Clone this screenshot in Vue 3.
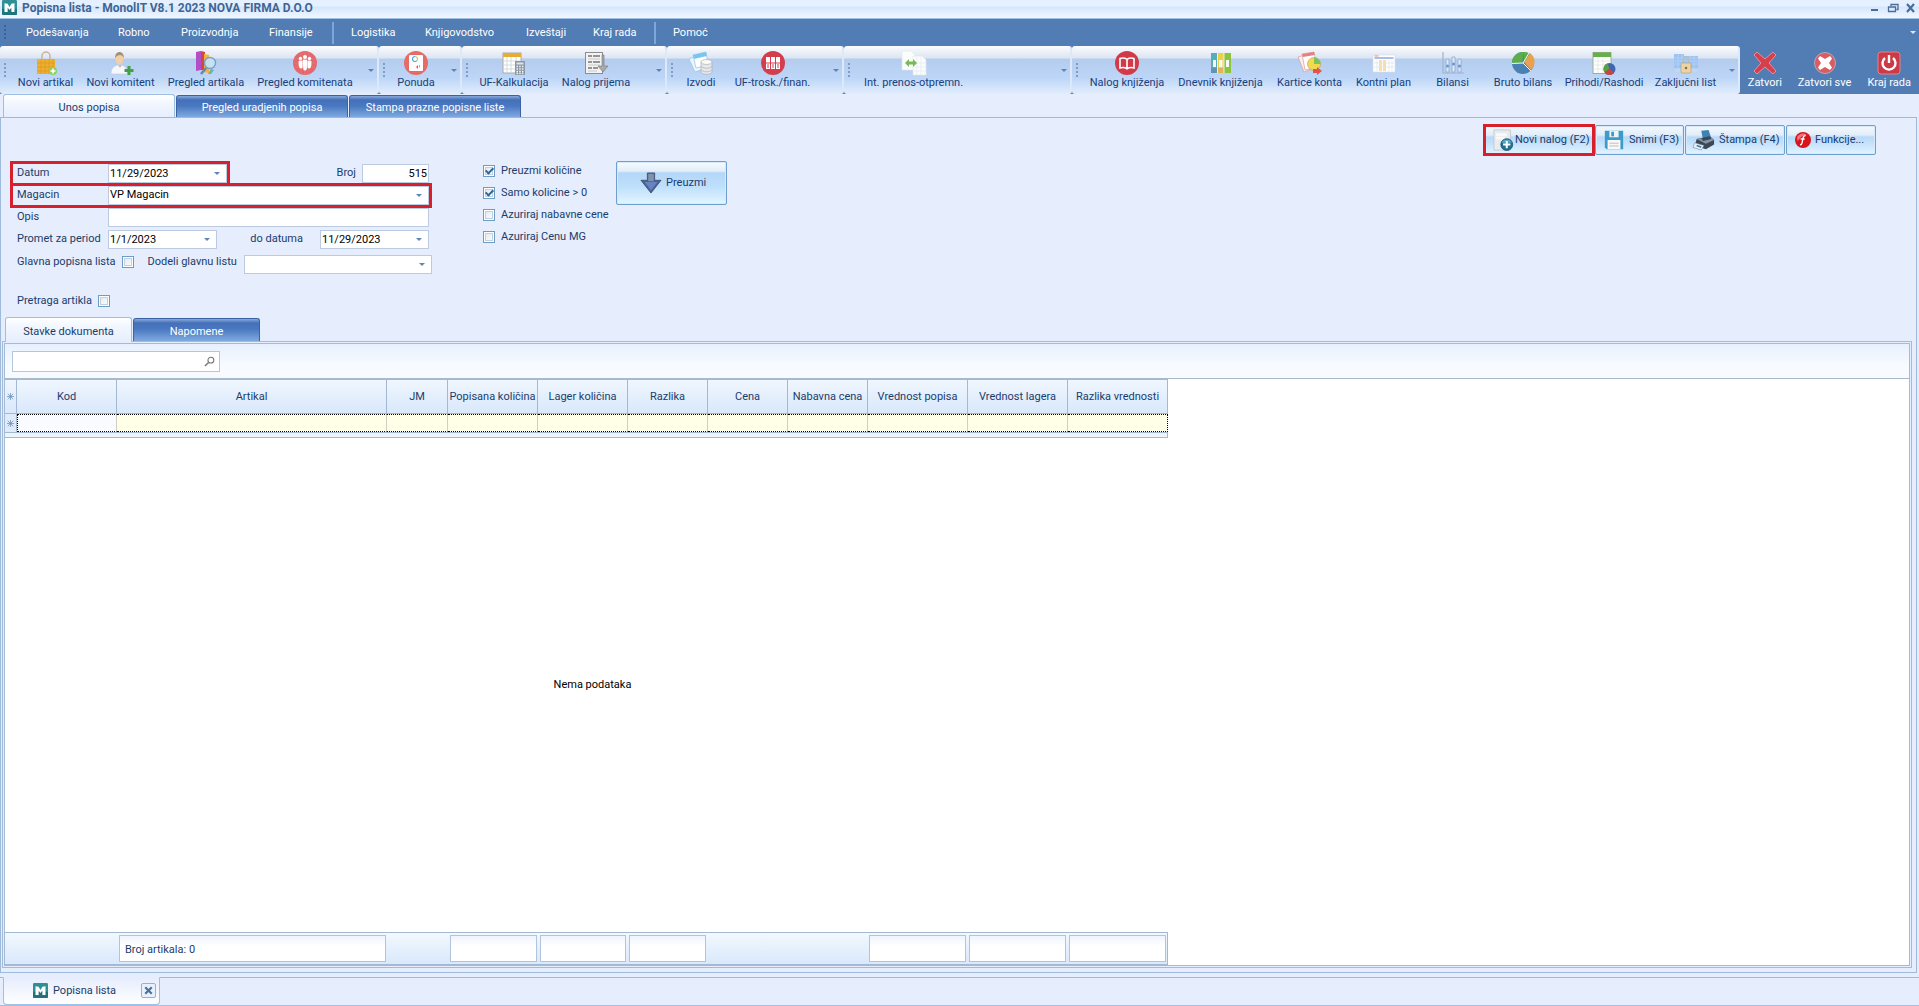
<script setup>
import { ref } from 'vue'

const menu = [
  { label: 'Podešavanja', w: 92 },
  { label: 'Robno', w: 63 },
  { label: 'Proizvodnja', w: 88 },
  { label: 'Finansije', w: 64 },
  { sep: true },
  { label: 'Logistika', w: 74 },
  { label: 'Knjigovodstvo', w: 101 },
  { label: 'Izveštaji', w: 67 },
  { label: 'Kraj rada', w: 62 },
  { sep: true },
  { label: 'Pomoć', w: 64 },
]

const icons = {
  logo: '<rect width="24" height="24" rx="2" fill="#2f8f96"/><path d="M0 14h24v8a2 2 0 0 1-2 2H2a2 2 0 0 1-2-2z" fill="#1f737d"/><path d="M4 5l5 1 3 5 3-5 5-1v14h-5v-7l-3 4-3-4v7H4z" fill="#fff"/>',
  bag: '<path d="M8 10V5a4 4 0 0 1 8 0v5" fill="none" stroke="#c9b49a" stroke-width="1.5"/><path d="M3 8h18v15H3z" fill="#eeb02c"/><path d="M3 12h18M3 16h18M3 20h18M7 8v15M11 8v15M15 8v15M19 8v15" stroke="#d9942a" stroke-width=".6"/><circle cx="19" cy="20" r="4" fill="#8fd060"/><path d="M19 17.500v5M16.500 20h5" stroke="#fff" stroke-width="1.600"/>',
  person: '<path d="M2 23c0-6 3-8 7-9h3c4 1 6 3 6 9z" fill="#f4f7fb" stroke="#c7d0dc" stroke-width=".7"/><ellipse cx="10.500" cy="7.500" rx="4" ry="6" fill="#f0cfa9"/><path d="M6 7c0-8 9-8 9 0-2-4-6-4-9 0z" fill="#a58f78"/><path d="M9 14l2 3 2-3" fill="#e4b98e"/><path d="M20 15v9M15.500 19.500h9" stroke="#43a047" stroke-width="3"/>',
  books: '<path d="M2 1l5-1v19l-5 1z" fill="#b04fc8"/><path d="M7 0l4 1v18l-4 0z" fill="#d8453c"/><path d="M10 3l5 1v18l-5-1z" fill="#f4b13c"/><circle cx="16" cy="12" r="5.500" fill="#c4e4fa" fill-opacity=".9" stroke="#7d9fc0" stroke-width="1.400"/><path d="M12 17l-5 6" stroke="#6b87a5" stroke-width="2.600"/><path d="M17 18l3 1-3 4h-3z" fill="#6fb2a0"/>',
  people: '<circle cx="12" cy="12" r="12" fill="#e4676b"/><path d="M2 8h20M1 12h22M2 16h20M8 1v22M12 0v24M16 1v22" stroke="#d9888c" stroke-width=".5"/><circle cx="7.500" cy="7.500" r="1.700" fill="#fff"/><circle cx="12" cy="6" r="2" fill="#fff"/><circle cx="16.500" cy="7.500" r="1.700" fill="#fff"/><path d="M6 10h3v7H7l-1-3zM10 9h4v6l-1 4h-2l-1-4zM15 10h3v4l-1 3h-2z" fill="#fff" stroke="#fff" stroke-width=".8"/>',
  offer: '<circle cx="12" cy="12" r="12" fill="#e66a66"/><rect x="5" y="4" width="14" height="16" rx="1" fill="#fff"/><path d="M11 5.500a2.500 2.500 0 1 0 2 4" fill="none" stroke="#52a8e0" stroke-width="1.200"/><path d="M11 5.500a2.500 2.500 0 0 1 2 4" fill="none" stroke="#e6b84c" stroke-width="1.200"/><path d="M12 16l2-2v4zM15 15l1-1v3z" fill="#e0575a"/>',
  calc: '<rect x="1" y="2" width="18" height="20" fill="#fff" stroke="#a9a9a9"/><path d="M1 2h18v4H1z" fill="#e6ad32"/><path d="M1 10h18M1 14h18M1 18h18M5 6v16M9 6v16M14 6v16" stroke="#cdd3da" stroke-width=".8"/><rect x="13" y="10" width="10" height="14" fill="#8c97a3"/><rect x="14.500" y="11.500" width="7" height="2" fill="#dbe5ee"/><path d="M14.500 15.500h7M14.500 18h7M14.500 20.500h7M14.500 22.500h7" stroke="#f2f5f8" stroke-width="1.300" stroke-dasharray="1.500 1.200"/>',
  receipt: '<rect x="1.500" y="1.500" width="17" height="21" fill="#f3f3f3" stroke="#8d8d8d"/><path d="M4 5h4M9 5h7M4 11h4M9 11h7M4 17h4M9 17h5" stroke="#777" stroke-width="1.400"/><path d="M4 8h12M4 14h12M4 20h9" stroke="#c9c9c9"/><path d="M18 4h2v11h4l-5 6-5-6h4z" fill="#a9a9a9" stroke="#777" stroke-width=".6"/>',
  statement: '<path d="M0 8l14-6 3 15-11 4z" fill="#eaf5fd" stroke="#9bc9e8" stroke-width=".8"/><path d="M4 4l13-3 2 13-12 3z" fill="#fff" stroke="#9bc9e8" stroke-width=".8"/><path d="M4 4l13-3 .8 4L5 8z" fill="#79c4f1"/><path d="M12 11v10c0 3 11 3 11 0V11z" fill="#e6e8ea" stroke="#aab0b5" stroke-width=".7"/><ellipse cx="17.500" cy="11" rx="5.500" ry="2.500" fill="#f9f9f9" stroke="#aab0b5" stroke-width=".7"/><path d="M12 15c1 3 10 3 11 0M12 18.500c1 3 10 3 11 0" fill="none" stroke="#aab0b5" stroke-width=".7"/>',
  folders: '<circle cx="12" cy="12" r="12" fill="#d43d4c"/><path d="M5 6h4v12H5zM10 6h4v12h-4zM15 6h4v12h-4z" fill="#fff"/><path d="M4 12h16" stroke="#d43d4c" stroke-width="1"/><path d="M7 13v4M12 13v4M17 13v4" stroke="#d43d4c" stroke-width="1"/>',
  transfer: '<path d="M0 0h9l4 4v15H0z" fill="#fbfdfc" stroke="#dfe7e9" stroke-width=".6"/><path d="M11 5h9l4 4v15H11z" fill="#fbfdfc" stroke="#dfe7e9" stroke-width=".6"/><path d="M11 12h13M11 16h13M11 20h13M15 5v19M19 5v19" stroke="#e2eaee" stroke-width=".6"/><path d="M3 12l4-4v2.500h4V8l4 4-4 4v-2.500H7V16z" fill="#79b956"/>',
  book: '<circle cx="12" cy="12" r="12" fill="#d33a49"/><path d="M5 7.500c3-1 5-.5 7 .8 2-1.300 4-1.800 7-.8v9.500c-3-1-5-.5-7 .8-2-1.300-4-1.800-7-.8zM12 8v10" fill="none" stroke="#fff" stroke-width="1.600"/>',
  binders: '<rect x="2" y="2" width="6.500" height="20" fill="#54aebb"/><rect x="8.500" y="2" width="6.500" height="20" fill="#ecd04b"/><rect x="15" y="2" width="7" height="20" fill="#8bc53f"/><path d="M4 9h3v7H4zM10 9h3.500v7H10zM17 9h3v7h-3z" fill="#f7f8f2"/><path d="M2 17h6.500v5H2z" fill="#5f94b4"/><path d="M8.500 17H15v5H8.500z" fill="#e0b654"/><path d="M8.500 2v20M15 2v20" stroke="#fff" stroke-width=".8"/>',
  cards: '<path d="M0 6l10-3 4 15-8 3z" fill="#fbeeee" stroke="#d99" stroke-width=".7"/><path d="M4 3l12-2 3 15-12 3z" fill="#fff" stroke="#d99" stroke-width=".7"/><path d="M4 3l12-2 .7 3L5 6z" fill="#e58080"/><circle cx="16" cy="13" r="6.500" fill="#f3d94e" stroke="#b9a04c" stroke-width=".6"/><path d="M16 13V6.500a6.500 6.500 0 0 1 6.500 6.500z" fill="#7bc35b"/><path d="M15 18h4v-2l5 4-5 4v-2h-4z" fill="#e0564e"/>',
  plan: '<rect x="1" y="4" width="22" height="17" fill="#fff" stroke="#d5dde8" stroke-width=".7"/><path d="M2.500 7h19" stroke="#8fa9dc" stroke-width="1.500"/><path d="M2.500 5h4" stroke="#e38b7d"/><path d="M7 9h3v11H7zM11 9h3v11h-3z" fill="#f8dfa8"/><path d="M2 12h20M2 16h20M5 9v11M17 9v11M20 9v11" stroke="#dce3ec" stroke-width=".7"/>',
  chart: '<path d="M2 1v21h21" fill="none" stroke="#9db3d0" stroke-width="1.200"/><path d="M5 8h3v13H5zM11 6h3v15h-3zM17 8h3v13h-3z" fill="#dfeaf8" stroke="#8aa8d0" stroke-width=".8"/><circle cx="6.500" cy="15" r="1.500" fill="#6d93c8"/><circle cx="12.500" cy="13" r="1.500" fill="#6d93c8"/><circle cx="18.500" cy="15" r="1.500" fill="#6d93c8"/>',
  pie: '<circle cx="12" cy="12" r="11" fill="#4b80b3"/><path d="M11 12L13 1A11 11 0 0 0 1 12.500z" fill="#5dae4a"/><path d="M13 11l6-9a11 11 0 0 1 1 17z" fill="#e8a14e"/><path d="M13 11V1a11 11 0 0 1 6 1.500z" fill="#5dae4a"/><path d="M1 12.500L12 12l8 8M12 12l6-10" fill="none" stroke="#f2f6fa" stroke-width="1"/>',
  income: '<rect x="1" y="1.500" width="18" height="21" fill="#fdfefd" stroke="#9cad9c"/><path d="M1 1.500h18V6H1z" fill="#66b04a"/><path d="M1 10h18M1 14h18M1 18h18M6 6v16M11 6v16" stroke="#dbe3db" stroke-width=".6"/><circle cx="17.500" cy="18" r="6" fill="#4365ae"/><path d="M17.500 18l-2-5.700a6 6 0 0 0-3 9z" fill="#5d9f45"/><path d="M17.500 18l-5 3.400A6 6 0 0 0 22 22z" fill="#c9443f"/>',
  lock: '<path d="M0 3h10v2h14v12H0z" fill="#9cc4f3"/><path d="M0 7h24M0 10h24M0 13h24M4 3v14M8 3v14M16 5v12M20 5v12" stroke="#bdd9f8" stroke-width=".6"/><path d="M1 18h22v3H1z" fill="#c4d6ea"/><path d="M9 12V9a3 3 0 0 1 6 0v3" fill="none" stroke="#b9bec4" stroke-width="1.800"/><rect x="7" y="12" width="10" height="10" rx="1" fill="#ecd3a5" stroke="#b49a6c" stroke-width=".6"/><circle cx="12" cy="17" r="1.300" fill="#8c7347"/>',
  close: '<path d="M4 1l8 7 8-7 3 3-7 8 7 8-3 3-8-7-8 7-3-3 7-8-7-8z" fill="#d5404e" stroke="#e88e96" stroke-width="1"/>',
  closeall: '<circle cx="12" cy="12" r="10.500" fill="#dc5a62" stroke="#a9adc0" stroke-width="1"/><path d="M7 5l5 3 5-3 2 2.500-3 4.500 3 4.500-2 2.500-5-3-5 3-2-2.500L8 12 5 7.500z" fill="#fff"/>',
  power: '<rect x="1" y="1" width="22" height="22" rx="3" fill="#cc3a46" stroke="#e4808a"/><path d="M8 7a6.500 6.500 0 1 0 8 0M12 4v8" fill="none" stroke="#fff" stroke-width="2.400"/>',
  newdoc: '<path d="M1 1h18v22H1z" fill="#e9ecee"/><path d="M1 1h18v22H1z" fill="none" stroke="#b9c3cc" stroke-width=".8"/><path d="M3 6h12M3 10h10" stroke="#f7f9fa" stroke-width="3"/><circle cx="15" cy="17" r="6.500" fill="#1d7291" stroke="#144e68" stroke-width=".8"/><path d="M9.500 15a6 6 0 0 1 11 0z" fill="#58a9c4"/><path d="M15 13v8M11 17h8" stroke="#fff" stroke-width="2.200"/>',
  save: '<path d="M2 2h20v20H4l-2-2z" fill="#3e9ac9"/><path d="M7 2h10v7H7z" fill="#eef5f9"/><path d="M9 3h3v5H9z" fill="#3e9ac9"/><path d="M5 12h14v10H5z" fill="#f8f8f8"/><path d="M7 15.500h10M7 18.500h10" stroke="#b9b9b9"/>',
  print: '<path d="M9 2l8-1 3 9-9 2z" fill="#3f82b5"/><path d="M4 11l14-3 5 4v5l-9 5-12-4z" fill="#3c4754"/><path d="M4 11l5-1 2 3 9-2-1-3 4 4-9 4z" fill="#8695a6"/><path d="M2 15l10 3-3 5-9-3z" fill="#eef3f8" stroke="#6a7d91" stroke-width=".6"/><path d="M4 18l5 1.700" stroke="#3f82b5" stroke-width="2"/>',
  func: '<circle cx="12" cy="12" r="12" fill="#d8141c"/><path d="M3 8a10 9 0 0 1 15-4C12 4 8 8 4 14z" fill="#f0787c"/><path d="M16 5.500c-3-.5-3.500 1.500-4 4l-1.500 7c-.5 2-1 3-3 2.500M8.500 10.500h6" fill="none" stroke="#fff" stroke-width="2"/>',
  down: '<path d="M8 1h8v8h7L12 23 1 9h7z" fill="#4b638e" stroke="#34466b" stroke-width=".8"/><path d="M9 2h6v8h-6z" fill="#8392ac"/><path d="M5 11h14l-7 9z" fill="#6683c4"/>',
}

const groups = [
  { cls: 'g1', items: [['Novi artikal', 'bag', 69], ['Novi komitent', 'person', 81], ['Pregled artikala', 'books', 90], ['Pregled komitenata', 'people', 108]] },
  { cls: 'g2', items: [['Ponuda', 'offer', 52]] },
  { cls: 'g3', items: [['UF-Kalkulacija', 'calc', 82], ['Nalog prijema', 'receipt', 82]] },
  { cls: 'g4', items: [['Izvodi', 'statement', 46], ['UF-trosk./finan.', 'folders', 97]] },
  { cls: 'g5', items: [['Int. prenos-otpremn.', 'transfer', 117]] },
  { cls: 'g6', items: [['Nalog knjiženja', 'book', 88], ['Dnevnik knjiženja', 'binders', 99], ['Kartice konta', 'cards', 79], ['Kontni plan', 'plan', 69], ['Bilansi', 'chart', 69], ['Bruto bilans', 'pie', 72], ['Prihodi/Rashodi', 'income', 90], ['Zaključni list', 'lock', 73]] },
]
const exits = [['Zatvori', 'close', 50], ['Zatvori sve', 'closeall', 70], ['Kraj rada', 'power', 60]]

const columns = [
  { label: 'Kod', w: 100 },
  { label: 'Artikal', w: 270, sum: 'Broj artikala: 0' },
  { label: 'JM', w: 61 },
  { label: 'Popisana količina', w: 90, sum: '' },
  { label: 'Lager količina', w: 90, sum: '' },
  { label: 'Razlika', w: 80, sum: '' },
  { label: 'Cena', w: 80 },
  { label: 'Nabavna cena', w: 80 },
  { label: 'Vrednost popisa', w: 100, sum: '' },
  { label: 'Vrednost lagera', w: 100, sum: '' },
  { label: 'Razlika vrednosti', w: 100, sum: '' },
]

const datum = ref('11/29/2023')
const broj = ref('515')
const magacin = ref('VP Magacin')
const opis = ref('')
const od = ref('1/1/2023')
const doDatuma = ref('11/29/2023')
const glavna = ref(false)
const lista = ref('')
const pretraga = ref(false)
const trazi = ref('')
const options = ref([
  { id: 'o1', label: 'Preuzmi količine', on: true },
  { id: 'o2', label: 'Samo kolicine > 0', on: true },
  { id: 'o3', label: 'Azuriraj nabavne cene', on: false },
  { id: 'o4', label: 'Azuriraj Cenu MG', on: false },
])
</script>

<template>
  <div class="app">
    <header class="title">
      <svg class="logo" viewBox="0 0 24 24" v-html="icons.logo"></svg>
      <h1>Popisna lista - MonolIT V8.1 2023 NOVA FIRMA D.O.O</h1>
      <div class="wins">
        <button aria-label="Minimize"><svg viewBox="0 0 12 12"><path d="M2 7h7v2H2z" fill="#4c6c9c" /></svg></button>
        <button aria-label="Restore"><svg viewBox="0 0 12 12"><path d="M4 4V2.500h7v5H9.500M1.500 5h7v4.500h-7zM1 5h8" fill="none" stroke="#4c6c9c" stroke-width="1.300" /></svg></button>
        <button aria-label="Close"><svg viewBox="0 0 12 12"><path d="M2 2l7 8M9 2L2 10" stroke="#4c6c9c" stroke-width="2.200" /></svg></button>
      </div>
    </header>

    <nav class="menu">
      <span class="grip"></span>
      <template v-for="(m, i) in menu" :key="i">
        <span v-if="m.sep" class="msep"></span>
        <button v-else :style="{ width: m.w + 'px' }">{{ m.label }}</button>
      </template>
      <span class="arrow light"></span>
    </nav>

    <div class="tools">
      <div v-for="g in groups" :key="g.cls" class="group" :class="g.cls">
        <span class="grip"></span>
        <button v-for="t in g.items" :key="t[0]" class="tool" :style="{ width: t[2] + 'px' }">
          <svg viewBox="0 0 24 24" v-html="icons[t[1]]"></svg>
          <span>{{ t[0] }}</span>
        </button>
        <span class="arrow"></span>
      </div>
      <div class="exits">
        <button v-for="t in exits" :key="t[0]" class="tool" :style="{ width: t[2] + 'px' }">
          <svg viewBox="0 0 24 24" v-html="icons[t[1]]"></svg>
          <span>{{ t[0] }}</span>
        </button>
      </div>
    </div>

    <div class="tabs main">
      <button class="tab on">Unos popisa</button>
      <button class="tab">Pregled uradjenih popisa</button>
      <button class="tab">Stampa prazne popisne liste</button>
    </div>

    <main class="page">
      <div class="actions">
        <button class="glass a1 marked"><svg viewBox="0 0 24 24" v-html="icons.newdoc"></svg>Novi nalog (F2)</button>
        <button class="glass a2"><svg viewBox="0 0 24 24" v-html="icons.save"></svg>Snimi (F3)</button>
        <button class="glass a3"><svg viewBox="0 0 24 24" v-html="icons.print"></svg>Štampa (F4)</button>
        <button class="glass a4"><svg viewBox="0 0 24 24" v-html="icons.func"></svg>Funkcije...</button>
      </div>

      <div class="form">
        <div class="fields">
          <div class="row">
            <div class="pair marked">
              <label class="lead" for="datum">Datum</label>
              <span class="combo date1"><input id="datum" v-model="datum"><i class="arrow"></i></span>
            </div>
            <label class="end" for="broj">Broj</label>
            <span class="combo num"><input id="broj" v-model="broj"></span>
          </div>
          <div class="row">
            <div class="pair wide marked">
              <label class="lead" for="magacin">Magacin</label>
              <span class="combo full"><select id="magacin" v-model="magacin"><option>VP Magacin</option></select><i class="arrow"></i></span>
            </div>
          </div>
          <div class="row">
            <label class="lead" for="opis">Opis</label>
            <span class="combo full"><input id="opis" v-model="opis"></span>
          </div>
          <div class="row">
            <label class="lead" for="od">Promet za period</label>
            <span class="combo date2"><input id="od" v-model="od"><i class="arrow"></i></span>
            <label class="end" for="do">do datuma</label>
            <span class="combo date2 gap"><input id="do" v-model="doDatuma"><i class="arrow"></i></span>
          </div>
          <div class="row low">
            <label class="check rev"><input v-model="glavna" type="checkbox">Glavna popisna lista</label>
            <label class="mid" for="lista">Dodeli glavnu listu</label>
            <span class="combo list"><select id="lista" v-model="lista"><option value=""></option></select><i class="arrow"></i></span>
          </div>
          <div class="row search-row">
            <label class="check rev"><input v-model="pretraga" type="checkbox">Pretraga artikla</label>
          </div>
        </div>

        <div class="options">
          <label v-for="o in options" :key="o.id" class="check"><input v-model="o.on" type="checkbox">{{ o.label }}</label>
        </div>

        <button class="glass take"><svg viewBox="0 0 24 24" v-html="icons.down"></svg>Preuzmi</button>
      </div>

      <div class="tabs sub">
        <button class="tab on">Stavke dokumenta</button>
        <button class="tab">Napomene</button>
      </div>

      <section class="items">
        <div class="sheet">
          <div class="find">
            <label class="findbox">
              <input v-model="trazi" aria-label="Pretraga">
              <svg viewBox="0 0 12 12"><circle cx="7.500" cy="4.500" r="3.200" fill="none" stroke="#777" stroke-width="1.200" /><path d="M5 7L1 11" stroke="#777" stroke-width="1.600" /></svg>
            </label>
          </div>
          <div class="grid">
            <table>
              <colgroup>
                <col class="mark">
                <col v-for="c in columns" :key="c.label" :style="{ width: c.w + 'px' }">
              </colgroup>
              <thead>
                <tr>
                  <th><svg class="star" viewBox="0 0 9 9"><path d="M4.500 0v9M0 4.500h9M1 1l7 7M8 1l-7 7" /></svg></th>
                  <th v-for="c in columns" :key="c.label">{{ c.label }}</th>
                </tr>
              </thead>
              <tbody>
                <tr>
                  <td class="handle"><svg class="star" viewBox="0 0 9 9"><path d="M4.500 0v9M0 4.500h9M1 1l7 7M8 1l-7 7" /></svg></td>
                  <td v-for="c in columns" :key="c.label"></td>
                </tr>
              </tbody>
            </table>
            <div class="strip"></div>
            <div class="empty">Nema podataka</div>
            <div class="totals">
              <span class="mark"></span>
              <div v-for="c in columns" :key="c.label" class="cell" :style="{ width: c.w + 'px' }">
                <output v-if="c.sum !== undefined">{{ c.sum }}</output>
              </div>
            </div>
          </div>
        </div>
      </section>
    </main>

    <footer class="docs">
      <div class="doc">
        <svg class="logo" viewBox="0 0 24 24" v-html="icons.logo"></svg>
        <span>Popisna lista</span>
        <button aria-label="Zatvori karticu"><svg viewBox="0 0 12 12"><path d="M3 3l6 6M9 3L3 9" stroke="#4a719f" stroke-width="2" /></svg></button>
      </div>
    </footer>
  </div>
</template>

<style>
body { background: #e6edfd; }
</style>

<style scoped>
* { box-sizing: border-box; }
.app {
  display: flex;
  flex-direction: column;
  min-height: 100vh;
  font: 11px/14px Roboto, "Liberation Sans", sans-serif;
  color: #1b3c6b;
  background: #e6edfd;
}
button { font: inherit; color: inherit; padding: 0; margin: 0; border: 0; background: none; white-space: nowrap; }
label { white-space: nowrap; }
svg { display: block; overflow: visible; }

.title {
  display: flex;
  align-items: center;
  height: 19px;
  padding: 0 2px 3px 2px;
  background: linear-gradient(#e4f0ff 0, #e4f2ff 6px, #d5e6fd 7px, #f2f7ff 18px);
  border-bottom: 1px solid #9dbfe4;
}
.title h1 { flex: 1; margin: 0 0 0 5px; font-size: 12px; line-height: 14px; font-weight: 700; color: #3f6596; }
.logo { width: 15px; height: 15px; }
.wins { display: flex; gap: 6px; }
.wins svg { width: 12px; height: 12px; }

.menu { display: flex; align-items: center; height: 27px; background: #527cb4; color: #fff; padding-left: 4px; padding-right: 3px; }
.menu button { text-align: left; height: 22px; }
.grip {
  flex: none;
  width: 2px;
  height: 15px;
  background: repeating-linear-gradient(#7d9cc6 0, #7d9cc6 2px, transparent 2px, transparent 4px);
}
.menu .grip { margin-right: 20px; background: repeating-linear-gradient(#3b609a 0, #3b609a 2px, transparent 2px, transparent 4px); }
.msep { width: 2px; height: 22px; background: #7fa6d9; margin-right: 17px; margin-left: -1px; }
.arrow { flex: none; width: 0; height: 0; border: 3px solid transparent; border-bottom-width: 0; border-top-color: #5a86bb; }
.arrow.light { margin-left: auto; border-top-color: #d8e6f8; }

.tools { display: flex; height: 48px; background: #527cb4; }
.group {
  display: flex;
  align-items: center;
  padding: 0 3px 0 4px;
  border-right: 2px solid #dbe9fb;
  border-radius: 3px;
  background: linear-gradient(#fbfcfe 0, #dce5f2 12px, #b4cdee 13px, #bdd6f7 32px, #e2edfd 48px);
}
.group .grip { margin-right: 5px; }
.group .arrow { margin-left: auto; }
.g1 { width: 379px; }
.g2 { width: 83px; }
.g3 { width: 205px; }
.g4 { width: 177px; }
.g5 { width: 228px; }
.g6 { flex: 1; }
.tool { display: flex; flex-direction: column; align-items: center; height: 48px; padding-top: 5px; color: #17407c; }
.tool svg { width: 24px; height: 24px; }
.tool span { line-height: 16px; }
.exits { display: flex; width: 179px; }
.exits .tool { color: #fff; }

.tabs { display: flex; align-items: flex-end; gap: 1px; }
.tab {
  height: 22px;
  padding-top: 3px;
  border: 1px solid #3b62a5;
  border-bottom: 0;
  border-radius: 3px 3px 0 0;
  color: #fff;
  background: linear-gradient(#88a9db 0, #4470b8 4px, #4a78c0 10px, #7fa9df 100%);
}
.tab.on { height: 24px; color: #1b3c6b; border-color: #9dbfe4; background: linear-gradient(#fff, #f2f7ff 8px, #e6edfd); margin-bottom: -1px; }
.main { height: 23px; padding-left: 3px; }
.main .tab { width: 172px; }

.page {
  flex: 1;
  display: flex;
  flex-direction: column;
  margin: 0 2px 4px 0;
  padding: 0 4px 4px 1px;
  border: 1px solid #9db9dc;
}
.actions { display: flex; justify-content: flex-end; gap: 1px; padding: 7px 36px 0 0; }
.glass {
  display: flex;
  align-items: center;
  height: 30px;
  border: 1px solid #6f9fcd;
  border-radius: 2px;
  box-shadow: inset 0 0 0 1px #d6eafc;
  background: linear-gradient(#f2f8fe 0, #e3eef9 9px, #b9d9f8 11px, #c4e1fb 60%, #e2f3ff 100%);
}
.glass svg { width: 22px; height: 22px; }
.a1 { width: 110px; padding-left: 8px; }
.a2 { width: 89px; padding-left: 7px; gap: 4px; }
.a3 { width: 100px; padding-left: 7px; gap: 4px; }
.a4 { width: 90px; padding-left: 8px; gap: 4px; }
.a4 svg { width: 16px; height: 16px; }
.marked { position: relative; }
.marked::after { content: ""; position: absolute; border: 3px solid #d8202c; pointer-events: none; }
.a1.marked::after { inset: -2px; }

.form { display: flex; padding: 7px 0 9px 15px; }
.fields { width: 415px; padding-right: 3px; display: flex; flex-direction: column; }
.row { display: flex; align-items: center; height: 22px; }
.row.low { width: 415px; height: 24px; }
.search-row { height: 14px; margin-top: 20px; }
.pair { display: flex; align-items: center; width: 210px; }
.pair.wide { width: 100%; }
.pair.marked::after { inset: -3px -3px -3px -7px; }
.lead { width: 91px; }
.end { flex: 1; text-align: right; padding-right: 6px; }
.combo { display: flex; align-items: center; height: 19px; border: 1px solid #bccbe2; background: #fff; padding-right: 6px; }
.combo input, .combo select {
  flex: 1;
  min-width: 0;
  width: 100%;
  height: 17px;
  border: 0;
  outline: 0;
  padding: 0 0 0 1px;
  font: inherit;
  color: #000;
  background: transparent;
  appearance: none;
}
.date1 { width: 119px; }
.num { width: 67px; padding-right: 1px; }
.num input { text-align: right; }
.full { flex: 1; }
.date2 { width: 109px; }
.date2.gap { margin-left: 11px; }
.check { display: flex; align-items: center; gap: 6px; }
.check.rev { flex-direction: row-reverse; gap: 6px; }
.check input {
  appearance: none;
  width: 12px;
  height: 12px;
  margin: 0;
  border: 1px solid #6d9cc6;
  box-shadow: inset 0 0 0 1px #fff, inset 0 0 0 2px #c2cfdd;
  background: linear-gradient(135deg, #dfe7f0, #fff);
  display: grid;
  place-items: center;
}
.check input:checked::before { content: ""; width: 3px; height: 6px; margin-top: -2px; border: solid #2f6598; border-width: 0 2px 2px 0; transform: rotate(45deg); }
.mid { margin-left: 14px; }
.list { width: 188px; margin-left: auto; align-self: flex-end; }
.options { display: flex; flex-direction: column; gap: 8px; width: 133px; margin-left: 51px; padding-top: 2px; }
.take { width: 111px; height: 44px; padding-left: 23px; gap: 4px; margin-top: -1px; background: linear-gradient(#f6fbff 0, #e3eef9 9px, #b4d7f8 11px, #bfe0fc 60%, #e2f6ff 100%); }

.sub { height: 24px; padding-left: 3px; position: relative; }
.sub .tab { width: 127px; height: 23px; }
.sub .tab.on { height: 25px; }

.items { flex: 1; display: flex; border: 1px solid #a3bad9; padding: 1px; }
.sheet { flex: 1; display: flex; flex-direction: column; border: 1px solid #a3bad9; background: #fff; }
.find { height: 35px; padding: 7px; background: linear-gradient(#e6f0fe, #f7faff 60%); border-bottom: 1px solid #a9b9cc; }
.findbox { display: flex; align-items: center; width: 208px; height: 21px; padding-right: 4px; border: 1px solid #b5c7da; background: #fff; }
.findbox input { flex: 1; min-width: 0; height: 18px; border: 0; outline: 0; font: inherit; }
.findbox svg { width: 11px; height: 11px; }
.grid { flex: 1; display: flex; flex-direction: column; width: 1163px; }
table { width: 1163px; table-layout: fixed; border-collapse: separate; border-spacing: 0; }
.mark { width: 12px; }
th { height: 35px; padding: 0; font-weight: 400; white-space: nowrap; border: solid #a3b8d3; border-width: 1px 1px 1px 0; background: linear-gradient(#f0f6fe, #e4effd 50%, #d9e8fb); }
td { height: 18px; padding: 0; border: dotted #000; border-width: 1px 0; background: #fffee6; }
td + td { border-right: 1px solid #cfcfc4; }
td.handle { border: 0; border-right: 1px solid #a3b8d3; background: #dfeafa; }
td.handle + td { background: #f9fbff; border-left: 1px dotted #000; }
td:last-child { border-right: 1px dotted #000; }
.star { width: 7px; height: 7px; margin: 0 auto; fill: none; stroke: #6f91b8; stroke-width: 1; }
.strip { height: 6px; border: 1px solid #a3b8d3; border-left-width: 0; background: #edf4fc; }
.empty { flex: 1; display: flex; align-items: center; justify-content: center; padding-left: 12px; color: #000; }
.totals { display: flex; height: 33px; border: 1px solid #a3b8d3; border-left: 0; background: linear-gradient(#f2f8ff, #d9e8fb); }
.cell { padding: 2px 1px 2px 2px; }
.cell output { display: block; height: 27px; border: 1px solid #b0c4dc; background: linear-gradient(#eff4fe, #fff 10px); padding: 0 5px; line-height: 27px; }

.docs { height: 29px; padding-left: 3px; border-top: 1px solid #a3b8d3; border-bottom: 1px solid #a9bfdf; }
.doc { display: flex; align-items: center; width: 157px; height: 28px; margin-top: -1px; padding: 0 3px 1px 29px; border: 1px solid #9cc0e6; border-top-color: #e6edfd; border-radius: 0 0 4px 4px; background: linear-gradient(#e6edfd, #fff); }
.doc span { margin-left: 5px; }
.doc button { margin-left: auto; width: 15px; height: 15px; border: 1px solid #8fb3dc; border-radius: 2px; background: #e8f1fc; }
.doc button svg { width: 13px; height: 13px; }
</style>
